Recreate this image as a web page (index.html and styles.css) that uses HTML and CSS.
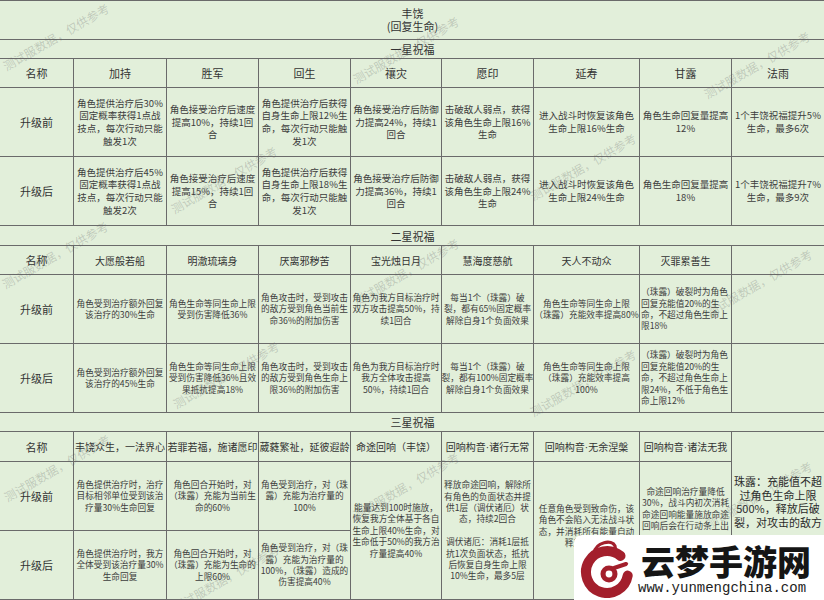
FILE: index.html
```html
<!DOCTYPE html>
<html lang="zh-CN">
<head>
<meta charset="utf-8">
<title>丰饶 祝福</title>
<link rel="stylesheet" href="styles.css">
</head>
<body>
<div class="page">
  <div class="sheet">
    <div class="c title">丰饶<br>(回复生命)</div>
    <div class="c band">一星祝福</div>

    <div class="c lbl">名称</div>
    <div class="c lbl">加持</div>
    <div class="c lbl">胜军</div>
    <div class="c lbl">回生</div>
    <div class="c lbl">禳灾</div>
    <div class="c lbl">愿印</div>
    <div class="c lbl">延寿</div>
    <div class="c lbl">甘露</div>
    <div class="c lbl">法雨</div>

    <div class="c lbl">升级前</div>
    <div class="c b1">角色提供治疗后30%<br>固定概率获得1点战<br>技点，每次行动只能<br>触发1次</div>
    <div class="c b1">角色接受治疗后速度<br>提高10%，持续1回<br>合</div>
    <div class="c b1">角色提供治疗后获得<br>自身生命上限12%生<br>命，每次行动只能触<br>发1次</div>
    <div class="c b1">角色接受治疗后防御<br>力提高24%，持续1<br>回合</div>
    <div class="c b1">击破敌人弱点，获得<br>该角色生命上限16%<br>生命</div>
    <div class="c b1">进入战斗时恢复该角色<br>生命上限16%生命</div>
    <div class="c b1">角色生命回复量提高<br>12%</div>
    <div class="c b1">1个丰饶祝福提升5%<br>生命，最多6次</div>

    <div class="c lbl">升级后</div>
    <div class="c b1">角色提供治疗后45%<br>固定概率获得1点战<br>技点，每次行动只能<br>触发2次</div>
    <div class="c b1">角色接受治疗后速度<br>提高15%，持续1回<br>合</div>
    <div class="c b1">角色提供治疗后获得<br>自身生命上限18%生<br>命，每次行动只能触<br>发1次</div>
    <div class="c b1">角色接受治疗后防御<br>力提高36%，持续1<br>回合</div>
    <div class="c b1">击破敌人弱点，获得<br>该角色生命上限24%<br>生命</div>
    <div class="c b1">进入战斗时恢复该角色<br>生命上限24%生命</div>
    <div class="c b1">角色生命回复量提高<br>18%</div>
    <div class="c b1">1个丰饶祝福提升7%<br>生命，最多9次</div>

    <div class="c band">二星祝福</div>

    <div class="c lbl">名称</div>
    <div class="c lbl2">大愿般若船</div>
    <div class="c lbl2">明澈琉璃身</div>
    <div class="c lbl2">厌离邪秽苦</div>
    <div class="c lbl2">宝光烛日月</div>
    <div class="c lbl2">慧海度慈航</div>
    <div class="c lbl2">天人不动众</div>
    <div class="c lbl2">灭罪累善生</div>
    <div class="c lbl2"></div>

    <div class="c lbl">升级前</div>
    <div class="c b2">角色受到治疗额外回复<br>该治疗的30%生命</div>
    <div class="c b2">角色生命等同生命上限<br>受到伤害降低36%</div>
    <div class="c b2">角色攻击时，受到攻击<br>的敌方受到角色当前生<br>命36%的附加伤害</div>
    <div class="c b2">角色为我方目标治疗时<br>双方攻击提高50%，持<br>续1回合</div>
    <div class="c b2">每当1个（珠露）破<br>裂，都有65%固定概率<br>解除自身1个负面效果</div>
    <div class="c b2">角色生命等同生命上限<br>（珠露）充能效率提高80%</div>
    <div class="c b2 left">（珠露）破裂时为角色<br>回复充能值20%的生<br>命，不超过角色生命上<br>限18%</div>
    <div class="c b2"></div>

    <div class="c lbl">升级后</div>
    <div class="c b2">角色受到治疗额外回复<br>该治疗的45%生命</div>
    <div class="c b2">角色生命等同生命上限<br>受到伤害降低36%且效<br>果抵抗提高18%</div>
    <div class="c b2">角色攻击时，受到攻击<br>的敌方受到角色生命上<br>限36%的附加伤害</div>
    <div class="c b2">角色为我方目标治疗时<br>我方全体攻击提高<br>50%，持续1回合</div>
    <div class="c b2">每当1个（珠露）破<br>裂，都有100%固定概率<br>解除自身1个负面效果</div>
    <div class="c b2">角色生命等同生命上限<br>（珠露）充能效率提高<br>100%</div>
    <div class="c b2 left">（珠露）破裂时为角色<br>回复充能值20%的生<br>命，不超过角色生命上<br>限24%，不低于角色生<br>命上限12%</div>
    <div class="c b2"></div>

    <div class="c band">三星祝福</div>

    <div class="c lbl">名称</div>
    <div class="c lbl2">丰饶众生，一法界心</div>
    <div class="c lbl2">若罪若福，施诸愿印</div>
    <div class="c lbl2">葳蕤繁祉，延彼遐龄</div>
    <div class="c lbl2">命途回响（丰饶）</div>
    <div class="c lbl2"><span>回响构音<span class="dot">·</span>诸行无常</span></div>
    <div class="c lbl2"><span>回响构音<span class="dot">·</span>无余涅槃</span></div>
    <div class="c lbl2"><span>回响构音<span class="dot">·</span>诸法无我</span></div>
    <div class="c big r3 top-big">珠露：充能值不超<br>过角色生命上限<br>500%，释放后破<br>裂，对攻击的敌方</div>

    <div class="c lbl">升级前</div>
    <div class="c b2">角色提供治疗时，治疗<br>目标相邻单位受到该治<br>疗量30%生命回复</div>
    <div class="c b2">角色回合开始时，对<br>（珠露）充能为当前生<br>命的60%</div>
    <div class="c b2">角色受到治疗，对（珠<br>露）充能为治疗量的<br>100%</div>
    <div class="c b2 r2">能量达到100时施放，<br>恢复我方全体基于各自<br>生命上限40%生命，对<br>生命低于50%的我方治<br>疗量提高40%</div>
    <div class="c b2 r2">释放命途回响，解除所<br>有角色的负面状态并提<br>供1层（调伏诸厄）状<br>态，持续2回合<br><br>调伏诸厄：消耗1层抵<br>抗1次负面状态，抵抗<br>后恢复自身生命上限<br>10%生命，最多5层</div>
    <div class="c b2 r2 top-mid">任意角色受到致命伤，该<br>角色不会陷入无法战斗状<br>态，并消耗所有能量自动<br>释放命途回</div>
    <div class="c b2 r2 top-small">命途回响治疗量降低<br>30%，战斗内初次消耗<br>命途回响能量施放命途<br>回响后会在行动条上出</div>

    <div class="c lbl">升级后</div>
    <div class="c b2">角色提供治疗时，我方<br>全体受到该治疗量30%<br>生命回复</div>
    <div class="c b2">角色回合开始时，对<br>（珠露）充能为生命的<br>上限60%</div>
    <div class="c b2">角色受到治疗，对（珠<br>露）充能为治疗量的<br>100%，（珠露）造成的<br>伤害提高40%</div>
  </div>

  <div class="wm w1">测试服数据，仅供参考</div>
  <div class="wm w2">测试服数据，仅供参考</div>
  <div class="wm w3">测试服数据，仅供参考</div>
  <div class="wm w4">测试服数据，仅供参考</div>
  <div class="wm w5">测试服数据，仅供参考</div>
  <div class="wm w6">测试服数据，仅供参考</div>
  <div class="wm w7">测试服数据，仅供参考</div>
  <div class="wm w8">测试服数据，仅供参考</div>
  <div class="wm w9">测试服数据，仅供参考</div>
  <div class="wm w10">测试服数据，仅供参考</div>
  <div class="wm w11">测试服数据，仅供参考</div>
  <div class="wm w12">测试服数据，仅供参考</div>
  <div class="wm w13">测试服数据，仅供参考</div>
  <div class="wm w14">测试服数据，仅供参考</div>

  <div class="brand">
    <svg class="brand-logo" width="62" height="60" viewBox="0 0 62 60">
      <path d="M44.5 17.9 A21 21 0 1 0 51.7 37.6" fill="none" stroke="#a31f2c" stroke-width="10" stroke-linecap="round"/>
      <path d="M18 15 C20 4 36 1 39 8 C41 13 33 16 30 11" fill="none" stroke="#a31f2c" stroke-width="3.2" stroke-linecap="round"/>
      <circle cx="33" cy="36" r="8.5" fill="#a31f2c"/>
      <circle cx="33" cy="36" r="3.4" fill="#fff"/>
      <path d="M38 30 L50 26" stroke="#a31f2c" stroke-width="4" stroke-linecap="round"/>
    </svg>
    <div class="brand-text">
      <div class="brand-name">云梦手游网</div>
      <div class="brand-url">www.yunmengchina.com</div>
    </div>
  </div>
</div>
</body>
</html>
```

FILE: styles.css
```css
html, body {
  margin: 0;
  padding: 0;
}

body {
  background: #e2efda;
  font-family: "Noto Sans CJK SC", "Noto Sans", sans-serif;
  color: #3d3d3d;
}

.page {
  position: relative;
  width: 824px;
  height: 600px;
  overflow: hidden;
}

.sheet {
  display: grid;
  width: 825px;
  grid-template-columns: 74px 93px 92px 92px 91px 92px 106px 92px 93px;
  grid-template-rows: 39px 19px 29px 69px 69px 20px 29px 69px 69px 19px 30px 69px 69px;
  border-top: 1px solid #6a6a6a;
}

.c {
  border-right: 1px solid #6a6a6a;
  border-bottom: 1px solid #6a6a6a;
  display: flex;
  flex-direction: column;
  align-items: center;
  justify-content: center;
  text-align: center;
  white-space: nowrap;
  overflow: visible;
  min-width: 0;
}

.title {
  grid-column: 1 / -1;
  border-right: none;
  font-size: 11px;
  line-height: 13px;
  color: #333;
}

.band {
  grid-column: 1 / -1;
  border-right: none;
  font-size: 11px;
  line-height: 14px;
  color: #333;
}

.lbl {
  font-size: 11px;
  line-height: 14px;
  color: #333;
}

.lbl2 {
  font-size: 10px;
  line-height: 13px;
  color: #333;
}

.dot {
  font-family: "Liberation Sans", sans-serif;
}

.b1 {
  font-size: 9.5px;
  line-height: 12.6px;
}

.b2 {
  font-size: 8.7px;
  line-height: 11.4px;
}

.left {
  align-items: flex-start;
  text-align: left;
  padding-left: 1px;
}

.r2 {
  grid-row: span 2;
}

.r3 {
  grid-row: span 3;
}

.top-mid {
  justify-content: flex-start;
  padding-top: 41px;
}

.top-small {
  justify-content: flex-start;
  padding-top: 24px;
}

.big {
  font-size: 11px;
  line-height: 13.7px;
  color: #2b2b2b;
}

.top-big {
  justify-content: flex-start;
  padding-top: 43px;
}

.wm {
  position: absolute;
  font-size: 12px;
  line-height: 12px;
  color: rgba(90, 90, 90, 0.26);
  white-space: nowrap;
  transform: translate(-50%, -50%) rotate(-30deg);
  pointer-events: none;
}

.w1 { left: 56px; top: 37px; }
.w2 { left: 406px; top: 50px; }
.w3 { left: 757px; top: 65px; }
.w4 { left: 224px; top: 180px; }
.w5 { left: 583px; top: 167px; }
.w6 { left: 55px; top: 255px; }
.w7 { left: 406px; top: 272px; }
.w8 { left: 759px; top: 283px; }
.w9 { left: 226px; top: 375px; }
.w10 { left: 583px; top: 383px; }
.w11 { left: 57px; top: 468px; }
.w12 { left: 406px; top: 486px; }
.w13 { left: 759px; top: 495px; }
.w14 { left: 226px; top: 578px; }

.brand {
  position: absolute;
  left: 574px;
  top: 535px;
  width: 250px;
  height: 65px;
  background: #fff;
  border-radius: 8px 0 0 0;
  display: flex;
  align-items: center;
  gap: 3px;
  padding-left: 2px;
  box-sizing: border-box;
}

.brand-logo {
  flex: none;
}

.brand-text {
  display: flex;
  flex-direction: column;
  align-items: flex-start;
}

.brand-name {
  font-family: "Noto Sans CJK SC", sans-serif;
  font-size: 34px;
  font-weight: 900;
  line-height: 40px;
  color: #151515;
  letter-spacing: 0;
}

.brand-url {
  font-family: "Liberation Mono", monospace;
  font-size: 14px;
  line-height: 14px;
  color: #222;
  margin-left: -3px;
}
```
